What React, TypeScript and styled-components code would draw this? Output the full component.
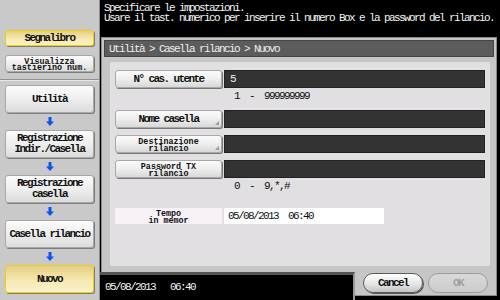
import React from "react";
import styled, { createGlobalStyle, css } from "styled-components";

const GlobalStyle = createGlobalStyle`
  html, body { margin: 0; padding: 0; background: #000; }
  body { width: 500px; height: 300px; overflow: hidden; }
  * { box-sizing: border-box; }
`

const mono = css`
  font-family: "Liberation Mono", "DejaVu Sans Mono", monospace;
  font-size: 11px;
  letter-spacing: -1.6px;
`
// two-line captions are squeezed; nudge them down so they sit centred
const tiny = css`
  font-family: "Liberation Mono", "DejaVu Sans Mono", monospace;
  font-size: 8.4px;
  line-height: 6.5px;
  letter-spacing: 0;
  padding-top: 3px;
`

const Screen = styled.div`
  display: grid;
  grid-template-columns: 100px 400px;
  width: 500px;
  height: 300px;
  ${mono};
`

// ---------- sidebar ----------
const Sidebar = styled.div`
  display: flex;
  flex-direction: column;
  background: #c9c9c9;
  border-right: 1px solid #8c8c8c;
`
const SideTop = styled.div`
  height: 80px;
  padding: 30px 0 0 5px;
  display: flex;
  flex-direction: column;
  gap: 9px;
  border-bottom: 1px solid #909090;
  box-shadow: 0 1px 0 #e6e6e6;
`
const Steps = styled.div`
  display: flex;
  flex-direction: column;
  padding: 5px 0 0 5px;
`
const SideButton = styled.div<{ $h: number; $active?: boolean; $small?: boolean }>`
  width: 89px;
  height: ${(p) => p.$h}px;
  display: flex;
  align-items: center;
  justify-content: center;
  text-align: center;
  border-radius: 3px;
  color: #111;
  font-weight: 700;
  line-height: 11px;
  white-space: pre;
  border: 1px solid ${(p) => (p.$active ? "#f0d000" : "#a8a8a8")};
  background: ${(p) =>
    p.$active
      ? "linear-gradient(#e6cf85, #f7eab6 60%, #fbf1c8)"
      : "linear-gradient(#fbfbfb, #eeeeee 50%, #dcdcdc)"};
  box-shadow: 1px 1px 0 #7c7c7c;
  ${(p) => p.$small && tiny};
  ${(p) => p.$small && "font-weight: 700;"}
`
const ArrowSlot = styled.div`
  width: 89px;
  height: 17px;
  display: flex;
  align-items: center;
  justify-content: center;
`

const DownArrow = () => (
  <svg width="8" height="9" viewBox="0 0 8 9">
    <path d="M2.5 0h3v4.5H8L4 9 0 4.5h2.5z" fill="#0a55f0" />
  </svg>
)

// ---------- main ----------
const Main = styled.div`
  display: flex;
  flex-direction: column;
  background: #000;
`
const Message = styled.div`
  height: 37px;
  padding: 3px 0 0 4px;
  color: #f4f4f4;
  line-height: 10px;
  white-space: pre;
`
const Frame = styled.div`
  margin: 0 3px 0 1px;
  height: 235px;
  background: #c6c6c6;
  border: 1px solid #8a8a8a;
  border-bottom: none;
  padding: 2px 2px 0 2px;
  display: flex;
  flex-direction: column;
`
const TitleBar = styled.div`
  height: 17px;
  background: #5c5c5c;
  border: 1px solid #444;
  color: #eeeeee;
  padding-left: 4px;
  display: flex;
  align-items: center;
`
const Panel = styled.div`
  margin: 5px 4px 0 6px;
  height: 204px;
  background: #e1dfe1;
  border-radius: 2px;
  padding: 8px 5px 0 5px;
  display: flex;
  flex-direction: column;
`
const Row = styled.div<{ $h?: number }>`
  display: flex;
  gap: 2px;
  height: ${(p) => p.$h ?? 18}px;
`
const FieldButton = styled.div<{ $small?: boolean; $keys?: boolean }>`
  position: relative;
  width: 107px;
  flex: none;
  display: flex;
  align-items: center;
  justify-content: center;
  text-align: center;
  white-space: pre;
  color: #111;
  font-weight: 700;
  border: 1px solid #a8a8a8;
  border-radius: 3px;
  background: linear-gradient(#fbfbfb, #eeeeee 50%, #d8d8d8);
  box-shadow: 1px 1px 0 #777;
  ${(p) => p.$small && tiny};
  ${(p) => p.$small && "font-weight: 700;"}
  ${(p) =>
    p.$keys &&
    css`
      &::after {
        content: "";
        position: absolute;
        right: 2px;
        bottom: 2px;
        border-left: 4px solid transparent;
        border-bottom: 4px solid #9a9a9a;
      }
    `}
`
const DarkInput = styled.div`
  flex: 1;
  background: #333333;
  border: 1px solid #222;
  color: #f2f2f2;
  padding-left: 5px;
  display: flex;
  align-items: center;
`
const Hint = styled.div<{ $h: number }>`
  height: ${(p) => p.$h}px;
  padding: 3px 0 0 119px;
  color: #111;
  white-space: pre;
  line-height: 10px;
`
const Gap = styled.div<{ $h: number }>`
  height: ${(p) => p.$h}px;
`
const MemLabel = styled.div`
  width: 107px;
  flex: none;
  background: #f8f1f8;
  display: flex;
  align-items: center;
  justify-content: center;
  text-align: center;
  white-space: pre;
  color: #111;
  ${tiny};
  font-weight: 700;
`
const MemValue = styled.div`
  width: 160px;
  background: #ffffff;
  color: #111;
  padding-left: 4px;
  display: flex;
  align-items: center;
  white-space: pre;
`

const Bottom = styled.div`
  display: flex;
  height: 28px;
`
const DateBar = styled.div`
  width: 255px;
  background: #000;
  border-top: 3px solid #555;
  border-right: 2px solid #9a9a9a;
  color: #f4f4f4;
  padding: 6px 0 0 5px;
  white-space: pre;
`
const Tray = styled.div`
  width: 142px;
  height: 24px;
  background: #c6c6c6;
  border-right: 1px solid #8a8a8a;
  border-bottom: 1px solid #8a8a8a;
  display: flex;
  align-items: flex-start;
  gap: 5px;
  padding: 1px 0 0 8px;
`
const Pill = styled.div<{ $disabled?: boolean }>`
  width: 60px;
  height: 20px;
  border-radius: 10px;
  display: flex;
  align-items: center;
  justify-content: center;
  font-weight: 700;
  color: ${(p) => (p.$disabled ? "#a0a0a0" : "#111")};
  border: 1px solid ${(p) => (p.$disabled ? "#9c9c9c" : "#5a5a5a")};
  background: ${(p) =>
    p.$disabled ? "linear-gradient(#d8d8d8, #cccccc)" : "linear-gradient(#ffffff, #e6e6e6 55%, #c4c4c4)"};
  box-shadow: ${(p) => (p.$disabled ? "none" : "1px 1px 0 #555")};
`

const steps = ["Utilità", "Registrazione\nIndir./Casella", "Registrazione\ncasella", "Casella rilancio"];

export default function App() {
  return (
    <Screen>
      <GlobalStyle />
      <Sidebar>
        <SideTop>
          <SideButton $h={16} $active>Segnalibro</SideButton>
          <SideButton $h={17} $small>{"Visualizza\ntastierino num."}</SideButton>
        </SideTop>
        <Steps>
          {steps.map((s) => (
            <React.Fragment key={s}>
              <SideButton $h={28}>{s}</SideButton>
              <ArrowSlot>
                <DownArrow />
              </ArrowSlot>
            </React.Fragment>
          ))}
          <SideButton $h={28} $active>Nuovo</SideButton>
        </Steps>
      </Sidebar>

      <Main>
        <Message>
          {"Specificare le impostazioni.\nUsare il tast. numerico per inserire il numero Box e la password del rilancio."}
        </Message>
        <Frame>
          <TitleBar>Utilità &gt; Casella rilancio &gt; Nuovo</TitleBar>
          <Panel>
            <Row>
              <FieldButton>N° cas. utente</FieldButton>
              <DarkInput>5</DarkInput>
            </Row>
            <Hint $h={22}>{"1  -  999999999"}</Hint>
            <Row>
              <FieldButton $keys>Nome casella</FieldButton>
              <DarkInput />
            </Row>
            <Gap $h={7} />
            <Row>
              <FieldButton $small $keys>{"Destinazione\nrilancio"}</FieldButton>
              <DarkInput />
            </Row>
            <Gap $h={7} />
            <Row>
              <FieldButton $small>{"Password TX\nrilancio"}</FieldButton>
              <DarkInput />
            </Row>
            <Hint $h={30}>{"0  -  9,*,#"}</Hint>
            <Row $h={16}>
              <MemLabel>{"Tempo\nin memor"}</MemLabel>
              <MemValue>{"05/08/2013  06:40"}</MemValue>
            </Row>
          </Panel>
        </Frame>
        <Bottom>
          <DateBar>{"05/08/2013   06:40"}</DateBar>
          <Tray>
            <Pill>Cancel</Pill>
            <Pill $disabled>OK</Pill>
          </Tray>
        </Bottom>
      </Main>
    </Screen>
  );
}
